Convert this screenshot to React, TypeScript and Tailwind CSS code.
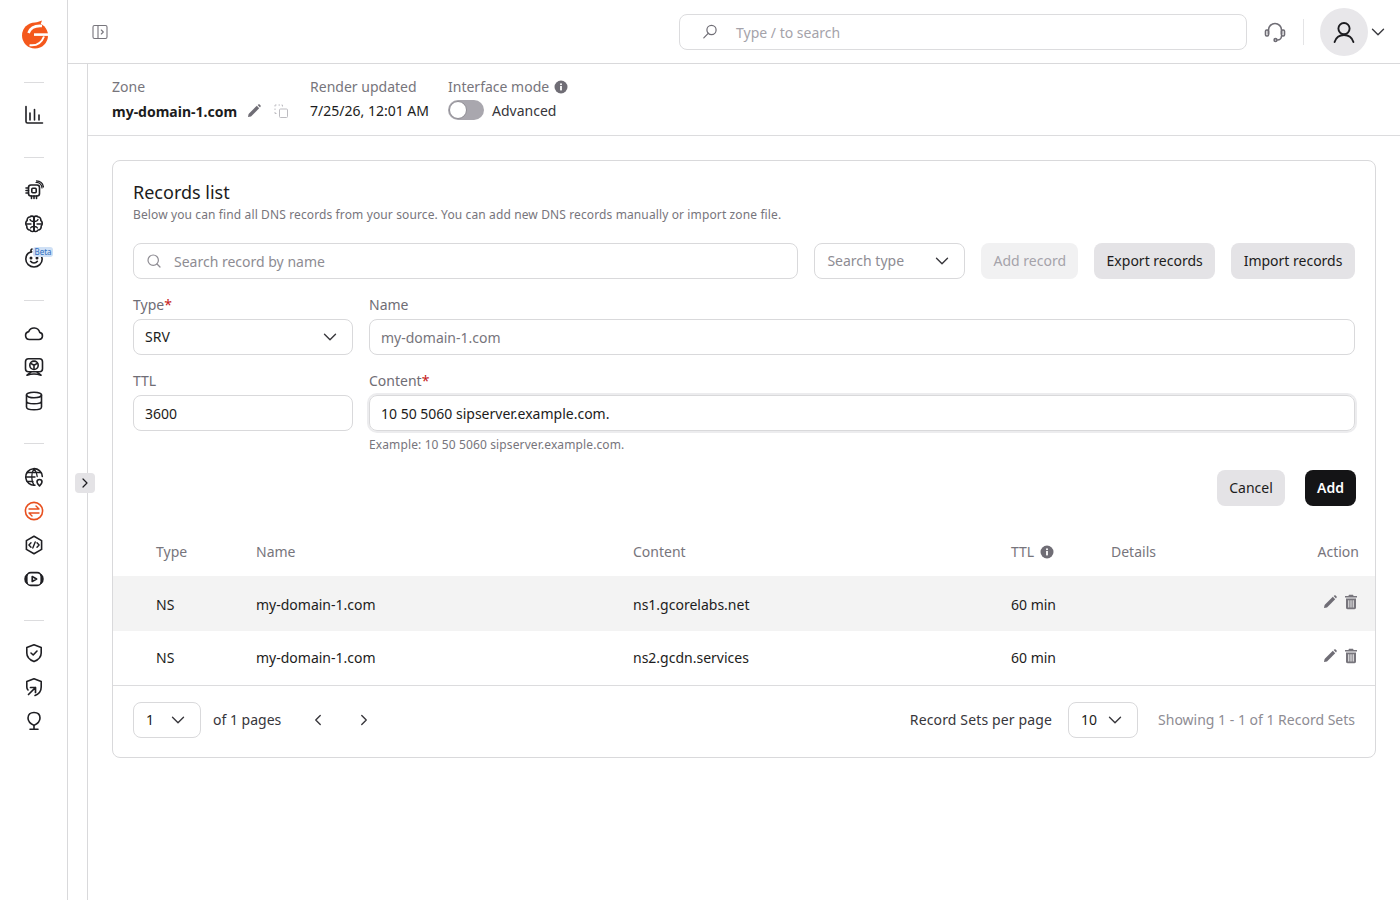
import { ChevronDown, ChevronLeft, ChevronRight } from 'lucide-react';
import type { ReactNode } from 'react';

function Logo() {
  return (
    <svg width="28" height="30" viewBox="0 0 28 30" fill="none">
      <circle cx="14" cy="15.5" r="13" fill="#f4581c" />
      <path d="M8 5 21 .5 19 6Z" fill="#f4581c" />
      <path d="M21 6C15 5.5 9.5 7.5 7.5 13" stroke="#fff" strokeWidth="2.6" />
      <path d="M13 14.6H27.5" stroke="#fff" strokeWidth="2.6" />
      <path d="M8.5 25.2C15 26 20.5 23 23 16.5" stroke="#fff" strokeWidth="2" />
    </svg>
  );
}

function NavIcon({ children, color = '#1f1f23' }: { children: ReactNode; color?: string }) {
  return (
    <div className="h-[34px] flex items-center justify-center relative">
      <svg width="20" height="20" viewBox="0 0 20 20" fill="none" stroke={color} strokeWidth="1.6" strokeLinecap="round" strokeLinejoin="round">
        {children}
      </svg>
    </div>
  );
}

function NavRule({ className }: { className: string }) {
  return <div className={`w-5 h-px bg-[#dcdcde] mx-auto ${className}`} />;
}

function Sidebar() {
  return (
    <aside className="w-[68px] shrink-0 border-r border-[#d9d9db] flex flex-col items-stretch">
      <div className="h-[70px] flex items-center justify-center pl-[3px]">
        <Logo />
      </div>
      <NavRule className="mt-[12px] mb-[15px]" />
      <NavIcon>
        <path d="M2 1.5V16.5A1.5 1.5 0 0 0 3.5 18H18.5" />
        <path d="M6 15V8M10.5 15V4.5M15 15V10" />
      </NavIcon>
      <NavRule className="mt-[25px] mb-[15px]" />
      <NavIcon>
        <rect x="4.5" y="5" width="11" height="11" rx="2.5" />
        <rect x="7.8" y="8.3" width="4.4" height="4.4" rx="1" />
        <path d="M2 8H4.5M2 10.5H4.5M2 13H4.5M7.5 16V18.5M10 16V18.5M12.5 16V18.5" />
        <path d="M12 2.5A5.5 5.5 0 0 1 18 8M12.5 .8A7.5 7.5 0 0 1 19.5 7" strokeWidth="1.2" />
      </NavIcon>
      <NavIcon>
        <path d="M10 3.5C9.5 2 7 1.5 5.8 3 4 3 2.8 4.8 3.2 6.5 1.5 7.5 1.2 10.5 2.8 12 2.5 14.5 4.2 16.2 6 16 7 18 9.5 18 10 16.5Z" />
        <path d="M10 3.5C10.5 2 13 1.5 14.2 3 16 3 17.2 4.8 16.8 6.5 18.5 7.5 18.8 10.5 17.2 12 17.5 14.5 15.8 16.2 14 16 13 18 10.5 18 10 16.5Z" />
        <path d="M10 3.5V16.5M2.5 10H7M17.5 10H13M6 5.5C6.5 7 8 7.5 10 7.5 12 7.5 13.5 7 14 5.5M6.5 14C7 12.8 8.5 12.5 10 12.5 11.5 12.5 13 12.8 13.5 14" strokeWidth="1.3" />
      </NavIcon>
      <div className="relative">
        <NavIcon>
          <path d="M7.5 3.8C4.5 4.6 1.8 7.2 1.8 11 1.8 15.5 5.5 19 10 19S18.2 15.5 18.2 11C18.2 9 17.2 7 15.7 5.7" />
          <path d="M7.5 3.8C6.6 3 6.8 1.4 8 1" />
          <path d="M6.6 13.3C8.3 15.6 11.7 15.6 13.4 13.3" />
          <circle cx="7" cy="10" r=".7" fill="#1f1f23" />
          <circle cx="13" cy="10" r=".7" fill="#1f1f23" />
        </NavIcon>
        <span className="absolute left-[33px] top-[6px] w-[20px] h-[10px] rounded-[3px] bg-[#cfe0f5] text-center text-[#2c6fc0] text-[8px] leading-[10px]">Beta</span>
      </div>
      <NavRule className="mt-[25px] mb-[15px]" />
      <NavIcon>
        <path d="M5.5 16.5H15A3.6 3.6 0 0 0 15.7 9.4 5.8 5.8 0 0 0 4.7 8.6 4 4 0 0 0 5.5 16.5Z" />
      </NavIcon>
      <NavIcon>
        <rect x="1.5" y="1.8" width="17" height="13" rx="3" />
        <circle cx="10" cy="8.3" r="4.2" />
        <path d="M10 8.3V11.5M10 8.3 7.2 6.6M10 8.3 12.8 6.6" />
        <path d="M3 18.2 7 15M17 18.2 13 15M3 18.2C7 16.8 13 16.8 17 18.2" />
      </NavIcon>
      <NavIcon>
        <ellipse cx="10" cy="4" rx="7.5" ry="2.8" />
        <path d="M2.5 4V16C2.5 17.6 5.8 18.8 10 18.8S17.5 17.6 17.5 16V4M2.5 10C2.5 11.6 5.8 12.8 10 12.8S17.5 11.6 17.5 10" />
      </NavIcon>
      <NavRule className="mt-[25px] mb-[16px]" />
      <NavIcon>
        <path d="M11 18.2A8.3 8.3 0 1 1 18.3 9.5" />
        <path d="M1.8 10H11M3 5.5H17M3 14.5H9M10 1.7C7 6 7 14 10 18.2M10 1.7C12 4 13 7 13.2 9.5" strokeWidth="1.3" />
        <path d="M15.5 19C14 17.4 13 16.2 13 15A2.5 2.5 0 0 1 18 15C18 16.2 17 17.4 15.5 19Z" fill="#fff" />
      </NavIcon>
      <NavIcon color="#e8501f">
        <circle cx="10" cy="10" r="8.6" />
        <path d="M5 8H15L12 5M15 12H5L8 15" strokeWidth="1.4" />
      </NavIcon>
      <NavIcon>
        <path d="M10 1.2 17.6 5.6V14.4L10 18.8 2.4 14.4V5.6Z" />
        <path d="M7 7.7 4.9 10 7 12.3M13 7.7 15.1 10 13 12.3M11.2 6.9 8.8 13.1" strokeWidth="1.4" />
      </NavIcon>
      <div className="h-[33px] flex items-center justify-center">
        <svg width="20" height="20" viewBox="0 0 20 20" fill="none" stroke="#1f1f23" strokeWidth="1.6" strokeLinecap="round" strokeLinejoin="round">
          <rect x="2.8" y="3.6" width="14.4" height="12.8" rx="4" />
          <path d="M2.8 6C.6 7.5.6 12.5 2.8 14M17.2 6C19.4 7.5 19.4 12.5 17.2 14" strokeWidth="1.8" />
          <path d="M8.2 7.5 12.6 10 8.2 12.5Z" />
        </svg>
      </div>
      <NavRule className="mt-[25px] mb-[15px]" />
      <NavIcon>
        <path d="M10 1.8 17.2 4.6V10C17.2 14 14 17 10 18.6 6 17 2.8 14 2.8 10V4.6Z" />
        <path d="M7 10 9.2 12 13 8" />
      </NavIcon>
      <NavIcon>
        <path d="M4 13C3 12 2.8 11 2.8 10V4.6L10 1.8 17.2 4.6V10C17.2 14 14.8 17 11 18.4" />
        <path d="M4.5 17.5 11.5 10.5M6.5 10.5H11.5V15.5" strokeWidth="1.7" />
      </NavIcon>
      <NavIcon>
        <path d="M10 1.5C13.5 1.5 16 3.5 16 7 16 10.5 13 13 10 14.4 7 13 4 10.5 4 7 4 3.5 6.5 1.5 10 1.5Z" />
        <path d="M10 14.4V18.2M6 18.2H14" />
      </NavIcon>
    </aside>
  );
}

function TopBar() {
  return (
    <header className="h-[64px] shrink-0 border-b border-[#d9d9db] flex items-center">
      <svg className="ml-[24px]" width="16" height="16" viewBox="0 0 16 16" fill="none" stroke="#77757c" strokeWidth="1.1" strokeLinejoin="round" strokeLinecap="round">
        <rect x="1" y="1.5" width="14" height="13" rx="1.5" />
        <path d="M6 1.5V14.5M9.3 6 11.3 8 9.3 10" />
      </svg>
      <div className="ml-[571px] mt-[1px] w-[568px] h-[36px] border border-[#dcdcde] rounded-[8px] flex items-center">
        <svg className="ml-[21px]" width="18" height="18" viewBox="0 0 18 18" fill="none" stroke="#6f6d75" strokeWidth="1.2" strokeLinecap="round">
          <circle cx="10.5" cy="7" r="4.6" />
          <path d="M7.2 10.3 2.8 14.8" />
        </svg>
        <span className="ml-[17px] text-[14px] text-[#a5a3aa]">Type / to search</span>
      </div>
      <svg className="ml-[16px]" width="24" height="24" viewBox="0 0 24 24" fill="none" stroke="#6f6d75" strokeWidth="1.6" strokeLinecap="round">
        <path d="M5.5 14V10A6.5 6.5 0 0 1 18.5 10V14" />
        <rect x="2.5" y="10" width="3" height="6" rx="1.2" />
        <rect x="18.5" y="10" width="3" height="6" rx="1.2" />
        <path d="M18.5 16C18.5 18.5 16.5 20 14.5 20" />
        <circle cx="12.5" cy="20" r="1.4" />
      </svg>
      <div className="ml-[16px] w-px h-[26px] bg-[#e4e4e6]" />
      <div className="ml-[16px] w-[48px] h-[48px] rounded-full bg-[#e8e7ea] flex items-center justify-center">
        <svg width="24" height="24" viewBox="0 0 24 24" fill="none" stroke="#1c1c20" strokeWidth="1.9" strokeLinecap="round">
          <circle cx="12" cy="8.6" r="5.6" />
          <path d="M2.6 22C4 17.6 7.5 15 12 15S20 17.6 21.4 22" />
        </svg>
      </div>
      <ChevronDown className="ml-[-1px]" size={22} color="#3a3a3f" strokeWidth={1.5} />
    </header>
  );
}

function InfoDot() {
  return (
    <svg width="14" height="14" viewBox="0 0 14 14">
      <circle cx="7" cy="7" r="6.5" fill="#6f6d75" />
      <rect x="6.1" y="6" width="1.8" height="4.4" fill="#fff" />
      <circle cx="7" cy="4.2" r="1" fill="#fff" />
    </svg>
  );
}

function EditIcon() {
  return (
    <svg width="16" height="16" viewBox="0 0 16 16" fill="#6f6d75">
      <path d="M2 14 2.6 11 10.8 2.8 13.2 5.2 5 13.4Z" />
      <path d="M11.6 2 12.4 1.4C12.8 1.1 13.2 1.1 13.6 1.4L14.6 2.4C14.9 2.8 14.9 3.2 14.6 3.6L14 4.4Z" />
    </svg>
  );
}

function TrashIcon() {
  return (
    <svg width="16" height="16" viewBox="0 0 16 16" fill="#77757c">
      <path d="M6 .8H10L10.6 2H14V3.6H2V2H5.4Z" />
      <path fillRule="evenodd" d="M3 4.6H13V13.6C13 14.6 12.4 15.2 11.4 15.2H4.6C3.6 15.2 3 14.6 3 13.6ZM5.3 6.2V13.4H6.3V6.2ZM7.5 6.2V13.4H8.5V6.2ZM9.7 6.2V13.4H10.7V6.2Z" />
    </svg>
  );
}

function ZoneBar() {
  return (
    <div className="h-[72px] border-b border-[#dcdcde] pl-[24px] pt-[12px] flex shrink-0">
      <div>
        <div className="text-[14px] leading-[22px] text-[#77757c]">Zone</div>
        <div className="flex items-center mt-[2px] h-[22px]">
          <span className="text-[14px] font-bold text-[#1c1c20]">my-domain-1.com</span>
          <span className="ml-[9px]"><EditIcon /></span>
          <svg className="ml-[11px]" width="16" height="16" viewBox="0 0 16 16" fill="none" stroke="#bdbcc1" strokeWidth="1">
            <rect x="6.5" y="6" width="8" height="8.5" rx="1" />
            <path d="M2 2H3.5M2 2V3.5M2 5.5V7M2 9V10.5H3.5M5.5 2H7M8.5 2H9.5V3.5" />
          </svg>
        </div>
      </div>
      <div className="ml-[21px]">
        <div className="text-[14px] leading-[22px] text-[#77757c]">Render updated</div>
        <div className="text-[14px] leading-[22px] mt-[2px] text-[#1c1c20]">7/25/26, 12:01 AM</div>
      </div>
      <div className="ml-[19px]">
        <div className="flex items-center text-[14px] leading-[22px] text-[#77757c]">
          Interface mode<span className="ml-[5px]"><InfoDot /></span>
        </div>
        <div className="flex items-center mt-[1px] h-[22px]">
          <div className="w-[36px] h-[20px] rounded-full bg-[#a9a7ae] relative">
            <div className="absolute left-[1px] top-[1px] w-[18px] h-[18px] rounded-full bg-white border border-[#8e8c93]" />
          </div>
          <span className="ml-[8px] text-[14px] text-[#37363b]">Advanced</span>
        </div>
      </div>
    </div>
  );
}

function Select({ value, className, muted }: { value: string; className: string; muted?: boolean }) {
  return (
    <div className={`h-[36px] border border-[#d9d9db] rounded-[8px] flex items-center justify-between pr-[11px] text-[14px] ${muted ? 'text-[#8e8c93]' : 'text-[#1c1c20]'} ${className}`}>
      <span className="pb-[2px]">{value}</span>
      <ChevronDown size={22} color="#37363b" strokeWidth={1.5} />
    </div>
  );
}

function Label({ text, required }: { text: string; required?: boolean }) {
  return (
    <div className="text-[14px] leading-[20px] text-[#6f6d75] mb-[4px]">
      {text}
      {required && <span className="text-[#c52020]">*</span>}
    </div>
  );
}

const records = [
  { type: 'NS', name: 'my-domain-1.com', content: 'ns1.gcorelabs.net', ttl: '60 min', shaded: true },
  { type: 'NS', name: 'my-domain-1.com', content: 'ns2.gcdn.services', ttl: '60 min', shaded: false },
];

function RecordsCard() {
  return (
    <section className="mt-[24px] ml-[24px] mr-[24px] h-[598px] border border-[#d9d9db] rounded-[8px] flex flex-col">
      <div className="px-[20px] pt-[18px]">
        <h2 className="text-[18px] leading-[26px] text-[#1c1c20]">Records list</h2>
        <p className="text-[12px] leading-[18px] tracking-[0.12px] mt-[1px] text-[#77757c]">
          Below you can find all DNS records from your source. You can add new DNS records manually or import zone file.
        </p>
        <div className="flex mt-[19px] items-center">
          <div className="w-[666px] h-[36px] border border-[#d9d9db] rounded-[8px] flex items-center pl-[12px]">
            <svg width="16" height="16" viewBox="0 0 16 16" fill="none" stroke="#8e8c93" strokeWidth="1.2" strokeLinecap="round">
              <circle cx="7.2" cy="7.2" r="5.2" />
              <path d="M11 11 14 14" />
            </svg>
            <span className="ml-[12px] text-[14px] text-[#8e8c93]">Search record by name</span>
          </div>
          <Select value="Search type" muted className="ml-[16px] w-[151px] pl-[12px]" />
          <div className="ml-[16px] h-[36px] w-[97px] pb-[2px] rounded-[8px] bg-[#f1f1f2] flex items-center justify-center text-[14px] text-[#a5a3aa]">Add record</div>
          <div className="ml-[16px] h-[36px] w-[121px] pb-[2px] rounded-[8px] bg-[#e4e3e6] flex items-center justify-center text-[14px] text-[#1c1c20]">Export records</div>
          <div className="ml-[16px] h-[36px] w-[124px] pb-[2px] rounded-[8px] bg-[#e4e3e6] flex items-center justify-center text-[14px] text-[#1c1c20]">Import records</div>
        </div>
        <div className="grid grid-cols-[220px_1fr] gap-x-[16px] mt-[16px]">
          <div>
            <Label text="Type" required />
            <Select value="SRV" className="w-[220px] pl-[11px]" />
          </div>
          <div>
            <Label text="Name" />
            <div className="h-[36px] border border-[#d9d9db] rounded-[8px] flex items-center px-[11px] text-[14px] text-[#77757c]">my-domain-1.com</div>
          </div>
          <div className="mt-[16px]">
            <Label text="TTL" />
            <div className="h-[36px] border border-[#d9d9db] rounded-[8px] flex items-center px-[11px] text-[14px] text-[#1c1c20]">3600</div>
          </div>
          <div className="mt-[16px]">
            <Label text="Content" required />
            <div className="h-[36px] border border-[#d9d9db] rounded-[8px] flex items-center px-[11px] text-[14px] text-[#1c1c20] shadow-[0_0_0_2px_#ececee]">10 50 5060 sipserver.example.com.</div>
            <div className="text-[12px] leading-[18px] tracking-[0.12px] mt-[5px] text-[#77757c]">Example: 10 50 5060 sipserver.example.com.</div>
          </div>
        </div>
        <div className="flex justify-end mt-[16px] mr-[-1px]">
          <div className="h-[36px] w-[68px] pb-[2px] rounded-[8px] bg-[#e4e3e6] flex items-center justify-center text-[14px] text-[#1c1c20]">Cancel</div>
          <div className="ml-[20px] h-[36px] w-[51px] pb-[2px] rounded-[8px] bg-[#141416] flex items-center justify-center text-[14px] font-semibold text-white">Add</div>
        </div>
      </div>
      <div className="mt-[21px]">
        <div className="grid grid-cols-[100px_377px_378px_100px_1fr] h-[49px] items-center pl-[43px] pr-[16px] text-[14px] text-[#77757c]">
          <span>Type</span>
          <span>Name</span>
          <span>Content</span>
          <span className="flex items-center">TTL<span className="ml-[6px]"><InfoDot /></span></span>
          <span className="flex justify-between"><span>Details</span><span>Action</span></span>
        </div>
        {records.map((r) => (
          <div key={r.content} className={`grid grid-cols-[100px_377px_378px_100px_1fr] items-center pl-[43px] pr-[16px] text-[14px] text-[#1c1c20] ${r.shaded ? 'h-[55px] pt-[1px] bg-[#f3f3f3]' : 'h-[54px] pb-[2px]'}`}>
            <span>{r.type}</span>
            <span>{r.name}</span>
            <span>{r.content}</span>
            <span>{r.ttl}</span>
            <span className={`flex justify-end items-center gap-[5px] ${r.shaded ? 'pb-[5px]' : 'pb-[3px]'}`}><EditIcon /><TrashIcon /></span>
          </div>
        ))}
      </div>
      <div className="flex-1 border-t border-[#dcdcde] flex items-center px-[20px] pb-[3px] text-[14px] text-[#37363b]">
        <Select value="1" className="w-[68px] pl-[12px]" />
        <span className="ml-[12px] pb-[2px]">of 1 pages</span>
        <ChevronLeft className="ml-[28px]" size={18} color="#37363b" strokeWidth={1.8} />
        <ChevronRight className="ml-[28px]" size={18} color="#37363b" strokeWidth={1.8} />
        <span className="ml-auto pb-[2px] tracking-[0.14px]">Record Sets per page</span>
        <Select value="10" className="ml-[16px] w-[70px] pl-[12px]" />
        <span className="ml-[20px] pb-[2px] text-[#8e8c93]">Showing 1 - 1 of 1 Record Sets</span>
      </div>
    </section>
  );
}

export default function App() {
  return (
    <div className="w-[1400px] h-[900px] overflow-hidden flex bg-white relative font-['Noto_Sans',sans-serif]">
      <Sidebar />
      <div className="flex-1 flex flex-col min-w-0">
        <TopBar />
        <div className="flex-1 flex min-h-0">
          <div className="w-[20px] border-r border-[#d9d9db] shrink-0" />
          <main className="flex-1 min-w-0 flex flex-col">
            <ZoneBar />
            <RecordsCard />
          </main>
        </div>
      </div>
      <button className="absolute left-[75px] top-[473px] w-[20px] h-[20px] rounded-[4px] bg-[#e4e3e6] flex items-center justify-center">
        <ChevronRight size={16} color="#1c1c20" strokeWidth={1.8} />
      </button>
    </div>
  );
}
